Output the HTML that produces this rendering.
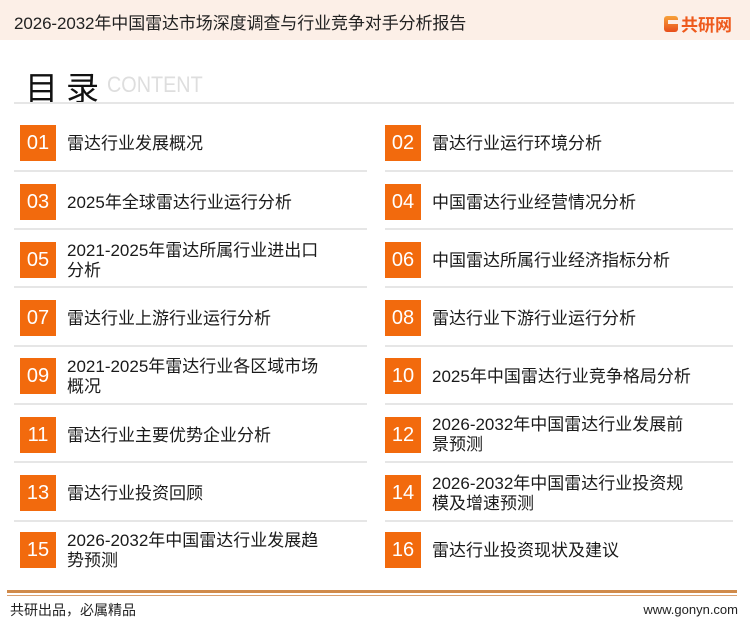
<!DOCTYPE html>
<html><head><meta charset="utf-8"><style>
*{margin:0;padding:0;box-sizing:border-box}
body{width:750px;height:622px;background:#fff;position:relative;overflow:hidden;font-family:"Liberation Sans","Noto Sans CJK SC",sans-serif;color:#1a1a1a}
.hdr{position:absolute;left:0;top:0;width:750px;height:40px;background:#fcefe7}
.hdr .t{position:absolute;left:14px;top:9px;font-size:17px;color:#222;letter-spacing:-0.1px}
.logo{position:absolute;left:664px;top:11px;display:flex;align-items:center}
.logo .g{width:14px;height:16px;background:linear-gradient(#f7a23a,#e84e1b);border-radius:3px;position:relative}
.logo .g:after{content:"";position:absolute;left:4px;top:4px;width:10px;height:4px;background:#fcefe7}
.logo span{font-size:17px;font-weight:bold;color:#ee5a1c;margin-left:3px}
.title{position:absolute;left:25px;top:62px;font-size:33px;color:#111;letter-spacing:8px}
.ct{position:absolute;left:107px;top:72px;font-size:22px;color:#dedede;transform:scaleX(0.9);transform-origin:left}
.line{position:absolute;height:2px;background:#e6e6e6}
.box{position:absolute;width:36px;height:36px;background:#f26a0d;color:#fff;font-size:20px;text-align:center;line-height:36px}
.tx{position:absolute;font-size:17px;line-height:20px;color:#1a1a1a}
.foot{position:absolute;left:7px;top:590px;width:730px;height:6px;border-top:3px solid #d08a4a;border-bottom:1px solid #d9a070}
.fl{position:absolute;left:10px;top:600px;font-size:14px;color:#222}
.fr{position:absolute;right:12px;top:602px;font-size:13px;color:#222}
</style></head><body>
<div class="hdr"><div class="t">2026-2032年中国雷达市场深度调查与行业竞争对手分析报告</div>
<div class="logo"><div class="g"></div><span>共研网</span></div></div>
<div class="title">目录</div><div class="ct">CONTENT</div>
<div class="line" style="left:14px;top:102px;width:720px"></div>

<div class="box" style="left:20px;top:125px">01</div><div class="tx" style="left:67px;top:134px">雷达行业发展概况</div>
<div class="box" style="left:385px;top:125px">02</div><div class="tx" style="left:432px;top:134px">雷达行业运行环境分析</div>
<div class="line" style="left:14px;top:170px;width:353px"></div><div class="line" style="left:385px;top:170px;width:348px"></div>

<div class="box" style="left:20px;top:184px">03</div><div class="tx" style="left:67px;top:193px">2025年全球雷达行业运行分析</div>
<div class="box" style="left:385px;top:184px">04</div><div class="tx" style="left:432px;top:193px">中国雷达行业经营情况分析</div>
<div class="line" style="left:14px;top:228px;width:353px"></div><div class="line" style="left:385px;top:228px;width:348px"></div>

<div class="box" style="left:20px;top:242px">05</div><div class="tx" style="left:67px;top:241px">2021-2025年雷达所属行业进出口<br>分析</div>
<div class="box" style="left:385px;top:242px">06</div><div class="tx" style="left:432px;top:251px">中国雷达所属行业经济指标分析</div>
<div class="line" style="left:14px;top:286px;width:353px"></div><div class="line" style="left:385px;top:286px;width:348px"></div>

<div class="box" style="left:20px;top:300px">07</div><div class="tx" style="left:67px;top:309px">雷达行业上游行业运行分析</div>
<div class="box" style="left:385px;top:300px">08</div><div class="tx" style="left:432px;top:309px">雷达行业下游行业运行分析</div>
<div class="line" style="left:14px;top:345px;width:353px"></div><div class="line" style="left:385px;top:345px;width:348px"></div>

<div class="box" style="left:20px;top:358px">09</div><div class="tx" style="left:67px;top:357px">2021-2025年雷达行业各区域市场<br>概况</div>
<div class="box" style="left:385px;top:358px">10</div><div class="tx" style="left:432px;top:367px">2025年中国雷达行业竞争格局分析</div>
<div class="line" style="left:14px;top:403px;width:353px"></div><div class="line" style="left:385px;top:403px;width:348px"></div>

<div class="box" style="left:20px;top:417px">11</div><div class="tx" style="left:67px;top:426px">雷达行业主要优势企业分析</div>
<div class="box" style="left:385px;top:417px">12</div><div class="tx" style="left:432px;top:415px">2026-2032年中国雷达行业发展前<br>景预测</div>
<div class="line" style="left:14px;top:461px;width:353px"></div><div class="line" style="left:385px;top:461px;width:348px"></div>

<div class="box" style="left:20px;top:475px">13</div><div class="tx" style="left:67px;top:484px">雷达行业投资回顾</div>
<div class="box" style="left:385px;top:475px">14</div><div class="tx" style="left:432px;top:474px">2026-2032年中国雷达行业投资规<br>模及增速预测</div>
<div class="line" style="left:14px;top:520px;width:353px"></div><div class="line" style="left:385px;top:520px;width:348px"></div>

<div class="box" style="left:20px;top:532px">15</div><div class="tx" style="left:67px;top:531px">2026-2032年中国雷达行业发展趋<br>势预测</div>
<div class="box" style="left:385px;top:532px">16</div><div class="tx" style="left:432px;top:541px">雷达行业投资现状及建议</div>

<div class="foot"></div>
<div class="fl">共研出品，必属精品</div>
<div class="fr">www.gonyn.com</div>
</body></html>
